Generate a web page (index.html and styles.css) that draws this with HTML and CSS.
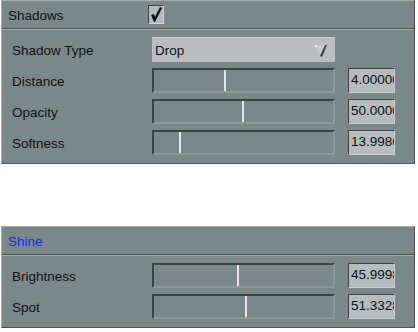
FILE: index.html
```html
<!DOCTYPE html>
<html lang="en">
<head>
    <meta charset="UTF-8">
    <title>Shadows and Shine</title>
    <link rel="stylesheet" href="styles.css">
</head>
<body>
    <div class="panel">
        <div class="panel-head">
            <span class="title">Shadows</span>
            <span class="check">
                <svg width="14" height="17" viewBox="0 0 14 17">
                    <path d="M2 9 L5 8 L6 11 L11 1 L13 2 L6 16 L5 16 Z" fill="#111"/>
                    <path d="M5 14 L6 16 L7 14 Z" fill="#2a2aa8"/>
                </svg>
            </span>
        </div>
        <div class="panel-body">
            <div class="row">
                <span class="label">Shadow Type</span>
                <div class="select">
                    <span>Drop</span>
                    <svg class="arrow" width="14" height="14" viewBox="0 0 14 14">
                        <path d="M1 1 L13 1 L7 13 Z" fill="#c9cdcd"/>
                        <path d="M11 1 L13 1 L8 13 L6 12 Z" fill="#3c4142"/>
                        <rect x="1" y="1" width="2" height="2" fill="#f2f2f2"/>
                    </svg>
                </div>
            </div>
            <div class="row">
                <span class="label">Distance</span>
                <div class="slider"><div class="thumb" style="left: 39.3%"></div></div>
                <div class="num">4.000000</div>
            </div>
            <div class="row">
                <span class="label">Opacity</span>
                <div class="slider"><div class="thumb" style="left: 49.2%"></div></div>
                <div class="num">50.000000</div>
            </div>
            <div class="row">
                <span class="label">Softness</span>
                <div class="slider"><div class="thumb" style="left: 13.7%"></div></div>
                <div class="num">13.998600</div>
            </div>
        </div>
    </div>

    <div class="panel shine">
        <div class="panel-head">
            <span class="title blue">Shine</span>
        </div>
        <div class="panel-body">
            <div class="row">
                <span class="label">Brightness</span>
                <div class="slider"><div class="thumb" style="left: 46.4%"></div></div>
                <div class="num">45.999800</div>
            </div>
            <div class="row">
                <span class="label">Spot</span>
                <div class="slider"><div class="thumb" style="left: 50.8%"></div></div>
                <div class="num">51.332800</div>
            </div>
        </div>
    </div>
</body>
</html>
```

FILE: styles.css
```css
*{
    margin: 0;
    padding: 0;
    box-sizing: border-box;
}
body{
    background: white;
    font-family: "Liberation Sans", Arial, sans-serif;
    font-size: 13.5px;
    color: #111;
}
.panel{
    margin-left: 1px;
    width: 414px;
    background: #7b8889;
    border: 1px solid;
    border-color: #a3adae #4b5455 #4b5455 #a3adae;
}
.shine{
    margin-top: 62px;
}
.panel-head{
    height: 28px;
    display: flex;
    align-items: center;
    padding-left: 6px;
    border-bottom: 1px solid #4f5859;
}
.title{
    width: 140px;
    padding-top: 1px;
}
.blue{
    color: #2222ff;
}
.check{
    width: 16px;
    height: 19px;
    background: #b2babc;
    border: 1px solid;
    border-color: #394142 #d0d6d7 #d0d6d7 #394142;
    display: flex;
    justify-content: center;
    align-items: center;
}
.panel-body{
    border-top: 1px solid #9ea9aa;
    padding: 7px 0 8px 10px;
    display: flex;
    flex-direction: column;
    gap: 6px;
}
.row{
    height: 25px;
    display: flex;
    align-items: center;
}
.label{
    width: 140px;
    padding-top: 1px;
}
.select{
    width: 183px;
    height: 25px;
    background: #b7bfc1;
    border-top: 1px solid #c7cecf;
    display: flex;
    align-items: center;
    justify-content: space-between;
    padding: 1px 7px 0 3px;
}
.arrow{
    margin-top: 1px;
}
.slider{
    position: relative;
    width: 183px;
    height: 25px;
    border: 2px solid;
    border-color: #3a4243 #8d9899 #8d9899 #3a4243;
}
.thumb{
    position: absolute;
    top: 0;
    bottom: 0;
    width: 2px;
    background: #e2e6e6;
}
.num{
    margin-left: 13px;
    width: 47px;
    height: 25px;
    background: #b4bcbe;
    border: 1px solid;
    border-color: #3a4243 #c8cfd0 #c8cfd0 #3a4243;
    padding: 3px 0 0 2px;
    overflow: hidden;
    white-space: nowrap;
}
```
